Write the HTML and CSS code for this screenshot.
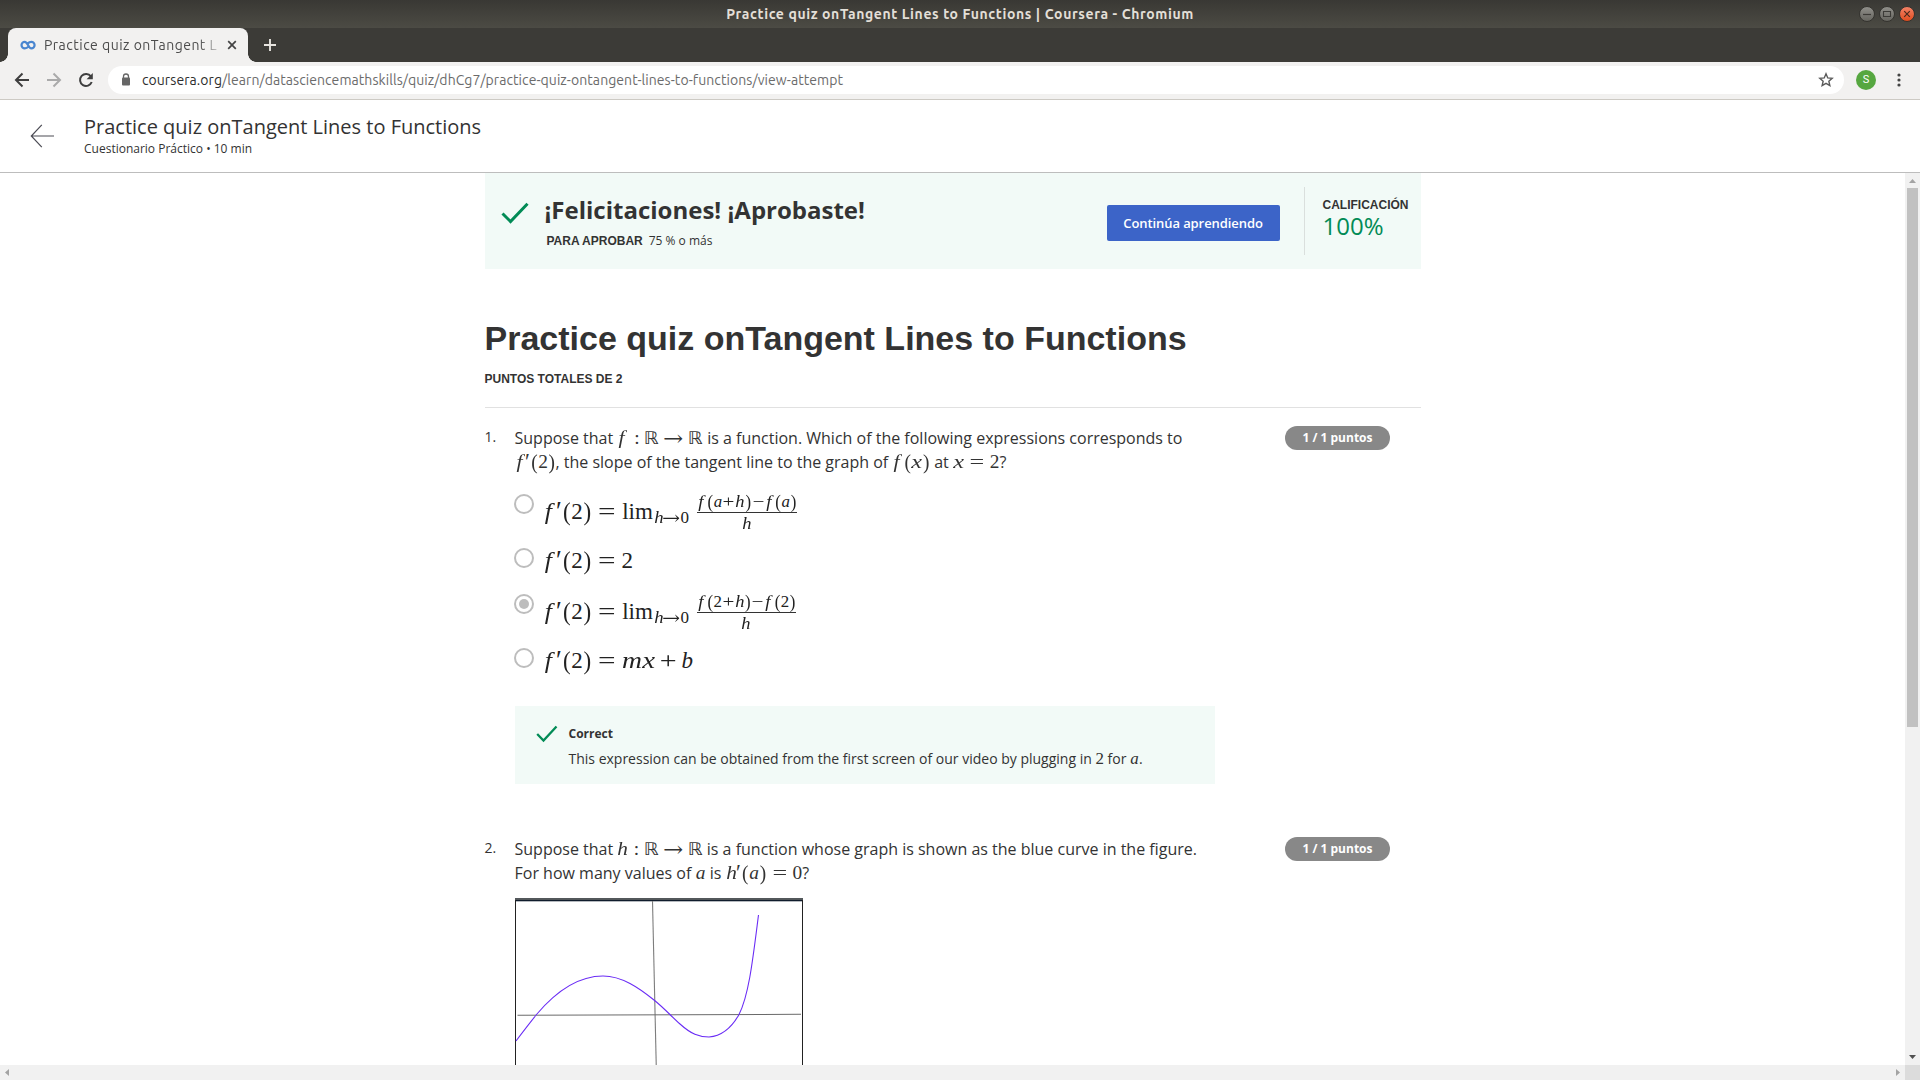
FILE: index.html
```html
<!DOCTYPE html>
<html lang="es">
<head>
<meta charset="utf-8">
<title>Practice quiz onTangent Lines to Functions | Coursera</title>
<link rel="stylesheet" href="styles.css">
</head>
<body>
<div class="window">
  <div class="titlebar">
    <span></span>
    <span class="window-title">Practice quiz onTangent Lines to Functions | Coursera - Chromium</span>
    <div class="window-buttons">
      <svg width="16" height="16" viewBox="0 0 16 16"><circle cx="8" cy="8" r="7.5" fill="url(#gray)" stroke="#33322e"/><path d="M4 8.5h8" stroke="#3c3b37" stroke-width="1.2"/><defs><linearGradient id="gray" x2="0" y2="1"><stop stop-color="#91908b"/><stop offset="1" stop-color="#65645e"/></linearGradient><linearGradient id="orange" x2="0" y2="1"><stop stop-color="#f48469"/><stop offset="1" stop-color="#e04b1c"/></linearGradient></defs></svg>
      <svg width="16" height="16" viewBox="0 0 16 16"><circle cx="8" cy="8" r="7.5" fill="url(#gray)" stroke="#33322e"/><path d="M4.5 5.5h7v5h-7z" fill="none" stroke="#3c3b37" stroke-width="1.1"/></svg>
      <svg width="16" height="16" viewBox="0 0 16 16"><circle cx="8" cy="8" r="7.5" fill="url(#orange)" stroke="#33322e"/><path d="M5.2 5.2l5.6 5.6M10.800 5.200l-5.600 5.600" stroke="#4a2a1c" stroke-width="1.2"/></svg>
    </div>
  </div>
  <div class="tabstrip">
    <div class="tab">
      <svg class="favicon" width="16" height="16" viewBox="0 0 16 16"><path d="M8.300 9.700C7.300 11 6.200 11.400 4.800 11.400a3.300 3.300 0 0 1 0-6.600C7.800 4.800 8.200 11.400 11.300 11.400a3.300 3.300 0 0 0 0-6.600C9.900 4.800 8.800 5.300 7.900 6.500" fill="none" stroke="#4a86d0" stroke-width="2.200"/></svg>
      <span class="tab-title">Practice quiz onTangent L</span>
      <svg width="10" height="10" viewBox="0 0 10 10"><path d="M1.200 1.200l7.600 7.600M8.800 1.200L1.200 8.800" stroke="#444" stroke-width="1.700"/></svg>
    </div>
    <svg class="newtab" width="12" height="12" viewBox="0 0 12 12"><path d="M6 0v12M0 6h12" stroke="#e6e4df" stroke-width="1.900"/></svg>
  </div>
  <div class="toolbar">
    <svg class="nav" width="16" height="16" viewBox="0 0 16 16"><path d="M15 8H2M8.500 1.500L2 8l6.500 6.500" fill="none" stroke="#3f3f3f" stroke-width="2"/></svg>
    <svg class="nav" width="16" height="16" viewBox="0 0 16 16"><path d="M1 8h13M7.500 1.500L14 8l-6.500 6.500" fill="none" stroke="#aaa" stroke-width="2"/></svg>
    <svg class="nav" width="16" height="16" viewBox="0 0 16 16"><path d="M12.900 4.400A6 6 0 1 0 13.700 10" fill="none" stroke="#3f3f3f" stroke-width="2"/><path d="M14.800 1v6.200H8.600z" fill="#3f3f3f"/></svg>
    <div class="omnibox">
      <svg width="10" height="14" viewBox="0 0 10 14"><path d="M2.500 6V3.500a2.500 2.500 0 0 1 5 0V6" fill="none" stroke="#666" stroke-width="1.300"/><rect x="1" y="4.500" width="8" height="8" rx="1" fill="#666"/></svg>
      <span class="url"><span class="host">coursera.org</span>/learn/datasciencemathskills/quiz/dhCg7/practice-quiz-ontangent-lines-to-functions/view-attempt</span>
      <svg width="16" height="16" viewBox="0 0 16 16"><path d="M8 1.800l1.750 4.100 4.450.4-3.350 2.950 1 4.350L8 11.300l-3.850 2.300 1-4.350L1.800 6.300l4.450-.4z" fill="none" stroke="#5a5a5a" stroke-width="1.400"/></svg>
    </div>
    <span class="avatar">S</span>
    <svg width="4" height="14" viewBox="0 0 4 14"><g fill="#444"><circle cx="2" cy="2" r="1.600"/><circle cx="2" cy="7" r="1.600"/><circle cx="2" cy="12" r="1.600"/></g></svg>
  </div>
  <header class="page-header">
    <svg width="24" height="24" viewBox="0 0 24 24"><path d="M11.800.8L1.300 12l10.500 11.200M1.300 12H24" fill="none" stroke="#4c4c55" stroke-width="1.200"/></svg>
    <div>
      <div class="header-title">Practice quiz onTangent Lines to Functions</div>
      <div class="header-sub">Cuestionario Práctico • 10 min</div>
    </div>
  </header>
  <div class="viewport">
    <main class="content">
      <section class="banner">
        <svg width="28" height="22" viewBox="0 0 28 22"><path d="M1.500 11.500l8 8L26.500 1.800" fill="none" stroke="#028b56" stroke-width="3"/></svg>
        <div class="banner-text">
          <div class="banner-title">¡Felicitaciones! ¡Aprobaste!</div>
          <div class="banner-sub"><strong class="caps">PARA APROBAR</strong><span>75 % o más</span></div>
        </div>
        <div class="button">Continúa aprendiendo</div>
        <div class="grade"><strong class="caps">CALIFICACIÓN</strong><span class="score">100%</span></div>
      </section>
      <h1>Practice quiz onTangent Lines to Functions</h1>
      <div class="total caps">PUNTOS TOTALES DE 2</div>

      <section class="question">
        <span class="number">1.</span>
        <div class="body">
          <div class="prompt">
            <div>Suppose that <span class="math"><i class="f">f</i><b class="rel colon">:</b><b class="bb">ℝ</b><b class="rel arrow">→</b><b class="bb">ℝ</b></span> is a function. Which of the following expressions corresponds to</div>
            <div><span class="math"><i class="f">f</i><b class="prime">′</b><b class="par">(</b><b class="d">2</b><b class="par">)</b></span>, the slope of the tangent line to the graph of <span class="math"><i class="f">f</i><b class="par">(</b><i class="x">x</i><b class="par">)</b></span> at <span class="math"><i class="x">x</i><b class="rel">=</b><b class="d">2</b></span>?</div>
          </div>
          <div class="options">
            <div class="option tall"><span class="radio"></span><span class="math"><i class="f">f</i><b class="prime">′</b><b class="par">(</b><b class="d">2</b><b class="par">)</b><b class="rel">=</b><b class="lim">lim</b><span class="sub"><i class="h">h</i><b class="arrow">→</b><b class="d">0</b></span><span class="frac"><span class="num"><i class="f">f</i><b class="par">(</b><i class="a">a</i><b class="op">+</b><i class="h">h</i><b class="par">)</b><b class="op">−</b><i class="f">f</i><b class="par">(</b><i class="a">a</i><b class="par">)</b></span><span class="den"><i class="h">h</i></span></span></span></div>
            <div class="option short"><span class="radio"></span><span class="math"><i class="f">f</i><b class="prime">′</b><b class="par">(</b><b class="d">2</b><b class="par">)</b><b class="rel">=</b><b class="d">2</b></span></div>
            <div class="option tall"><span class="radio checked"></span><span class="math"><i class="f">f</i><b class="prime">′</b><b class="par">(</b><b class="d">2</b><b class="par">)</b><b class="rel">=</b><b class="lim">lim</b><span class="sub"><i class="h">h</i><b class="arrow">→</b><b class="d">0</b></span><span class="frac"><span class="num"><i class="f">f</i><b class="par">(</b><b class="d">2</b><b class="op">+</b><i class="h">h</i><b class="par">)</b><b class="op">−</b><i class="f">f</i><b class="par">(</b><b class="d">2</b><b class="par">)</b></span><span class="den"><i class="h">h</i></span></span></span></div>
            <div class="option short"><span class="radio"></span><span class="math"><i class="f">f</i><b class="prime">′</b><b class="par">(</b><b class="d">2</b><b class="par">)</b><b class="rel">=</b><i class="m">m</i><i class="x">x</i><b class="plus">+</b><i class="b">b</i></span></div>
          </div>
          <div class="feedback">
            <svg width="22" height="18" viewBox="0 0 22 18"><path d="M1.200 9l6.300 6.500L20.500 1.500" fill="none" stroke="#028b56" stroke-width="2.300"/></svg>
            <div>
              <strong>Correct</strong>
              <p>This expression can be obtained from the first screen of our video by plugging in <span class="math"><b class="d">2</b></span> for <span class="math"><i class="a">a</i></span>.</p>
            </div>
          </div>
        </div>
        <span class="points">1 / 1 puntos</span>
      </section>

      <section class="question second">
        <span class="number">2.</span>
        <div class="body">
          <div class="prompt">
            <div>Suppose that <span class="math"><i class="h">h</i><b class="rel colon">:</b><b class="bb">ℝ</b><b class="rel arrow">→</b><b class="bb">ℝ</b></span> is a function whose graph is shown as the blue curve in the figure.</div>
            <div>For how many values of <span class="math"><i class="a">a</i></span> is <span class="math"><i class="h">h</i><b class="prime">′</b><b class="par">(</b><i class="a">a</i><b class="par">)</b><b class="rel">=</b><b class="d">0</b></span>?</div>
          </div>
          <svg class="figure" width="288" height="240" viewBox="0 0 288 240">
            <rect width="288" height="2" fill="#53585b"/><rect y="2" width="288" height="1.300" fill="#101c2c"/>
            <path d="M.5 2v238M287.500 2v238" stroke="#222" fill="none"/>
            <path d="M137.500 3l5.400 237" stroke="#7d7d7d" stroke-width="1.100"/>
            <path d="M2.500 117.300L286 116.300" stroke="#6a6a6a" stroke-width="1.100"/>
            <path d="M1 143C7 135 14 126 21.500 116.500C43 91 64 78 88 78C107 78 124 90 139 102C149 110 157 119 165 126C176 136 184 139 194 139C207 138 217 129 224 116.500C234 97 238 60 243.500 17" fill="none" stroke="#6a2cf5" stroke-width="1.100"/>
          </svg>
        </div>
        <span class="points">1 / 1 puntos</span>
      </section>
    </main>
    <div class="vscroll">
      <svg width="7" height="4" viewBox="0 0 7 4"><path d="M0 4L3.500 0 7 4z" fill="#a3a3a3"/></svg>
      <span class="thumb"></span>
      <svg width="7" height="4" viewBox="0 0 7 4"><path d="M0 0l3.500 4L7 0z" fill="#505050"/></svg>
    </div>
    <div class="hscroll">
      <svg width="4" height="7" viewBox="0 0 4 7"><path d="M4 0L0 3.500 4 7z" fill="#a3a3a3"/></svg>
      <svg width="4" height="7" viewBox="0 0 4 7"><path d="M0 0l4 3.500L0 7z" fill="#a3a3a3"/></svg>
    </div>
    <div class="corner"></div>
  </div>
</div>
</body>
</html>
```
FILE: styles.css
```css
* { box-sizing: border-box; }
body { margin: 0; background: #fff; color: #373a3c; font-family: "Open Sans", "Noto Sans", sans-serif; }
svg { display: block; flex: none; }
.window { width: 1920px; height: 1080px; overflow: hidden; display: grid; grid-template-rows: 28px 34px 38px 73px 907px; }

.titlebar { display: grid; grid-template-columns: 1fr auto 1fr; align-items: center; background: linear-gradient(#393834, #4c4b44); }
.window-title { color: #e3dfd7; font: bold 14px/28px Ubuntu, "Noto Sans", sans-serif; letter-spacing: .6px; white-space: nowrap; }
.window-buttons { display: flex; justify-content: flex-end; gap: 4px; padding-right: 5px; }

.tabstrip { display: flex; align-items: center; background: #3c3b37; padding-left: 8px; }
.tab { position: relative; width: 240px; height: 34px; display: flex; align-items: center; background: #f2f1f0; border-radius: 8px 8px 0 0; padding: 0 11px 0 12px; }
.tab::before, .tab::after { content: ""; position: absolute; bottom: 0; width: 8px; height: 8px; }
.tab::before { left: -8px; background: radial-gradient(circle at 0 0, #3c3b37 7.500px, #f2f1f0 8px); }
.tab::after { right: -8px; background: radial-gradient(circle at 100% 0, #3c3b37 7.500px, #f2f1f0 8px); }
.tab-title { width: 177px; margin: 0 8px 0 8px; white-space: nowrap; font: 14px/20px Ubuntu, "Noto Sans", sans-serif; letter-spacing: .48px; color: #4c4c4c; -webkit-mask-image: linear-gradient(90deg, #000 155px, transparent 180px); mask-image: linear-gradient(90deg, #000 155px, transparent 180px); }
.newtab { margin-left: 16px; }

.toolbar { display: flex; align-items: center; background: #f2f1f0; border-bottom: 1px solid #cdcac4; padding: 0 18px 2px 14px; }
.nav { margin-right: 16px; }
.omnibox { width: 1736px; height: 28px; margin-left: -2px; padding: 0 10px 0 13px; display: flex; align-items: center; background: #fff; border-radius: 14px; }
.url { flex: 1; margin-left: 11px; font: 14px/20px Ubuntu, "Noto Sans", sans-serif; letter-spacing: .07px; color: #6b6b6b; white-space: nowrap; }
.host { color: #2d2d2d; }
.avatar { width: 20px; height: 20px; margin: 0 21px 0 12px; border-radius: 50%; background: #56a740; color: #fff; font: 11px/20px Roboto, sans-serif; text-align: center; }

.page-header { display: flex; align-items: flex-start; gap: 30px; padding: 12px 0 0 30px; border-bottom: 1px solid #bdbdbd; color: #333; }
.page-header > svg { margin-top: 12px; }
.header-title { font-size: 20px; line-height: 30px; }
.header-sub { font-size: 12px; line-height: 14px; }

.viewport { display: grid; grid-template-columns: 1905px 15px; grid-template-rows: 892px 15px; }
.content { overflow: hidden; padding: 0 484px 0 484.500px; color: #333; }
.banner { height: 96px; background: #f2faf7; display: flex; align-items: flex-start; padding-left: 16px; }
.banner > svg { margin-top: 29px; }
.banner-text { width: 578px; flex: none; padding: 21px 0 0 16px; }
.banner-title { font-size: 24px; line-height: 32px; font-weight: 700; }
.banner-sub { display: flex; align-items: baseline; gap: 6px; margin: 6px 0 0 2px; font-size: 12px; line-height: 18px; }
.caps { font-family: "Liberation Sans", Arial, sans-serif; font-size: 12px; font-weight: 700; }
.button { width: 173px; height: 36px; flex: none; margin-top: 32px; background: #3c64c8; border-radius: 2px; color: #fff; font-size: 13px; font-weight: 600; letter-spacing: -.08px; line-height: 36px; text-align: center; }
.grade { height: 68px; margin: 14px 0 0 24px; padding: 10px 0 0 18px; border-left: 1px solid #dadfdd; }
.grade > * { display: block; }
.grade .caps { line-height: 16px; }
.score { font-size: 24px; line-height: 26px; color: #028b56; }
h1 { margin: 49px 0 0; font: bold 34px/40px "Liberation Sans", Arial, sans-serif; white-space: nowrap; }
.total { margin-top: 12px; height: 38px; line-height: 18px; border-bottom: 1px solid #e1e1e1; }

.question { display: grid; grid-template-columns: 30px 700px 1fr; padding-top: 18px; }
.second { padding-top: 53px; }
.number { font-size: 14px; line-height: 22px; }
.points { width: 105px; height: 24px; margin: 0 0 0 70.500px; border-radius: 12px; background: #888; color: #fff; font-size: 12px; font-weight: 700; line-height: 23px; text-align: center; }
.prompt { font-size: 16px; line-height: 24px; white-space: nowrap; }
.prompt > div { height: 24px; }

.math { display: inline-flex; align-items: baseline; line-height: 0; font-family: "Liberation Serif", "Times New Roman", serif; font-size: 1.21em; }
.math b { font-weight: 400; }
.math b, .math i { display: block; text-align: center; white-space: nowrap; }
.math .f { width: .597em; padding-left: .1em; text-align: left; transform: scaleX(1.12); }
.math .h { width: .576em; transform: scaleX(1.1); }
.math .a { width: .529em; }
.math .x { width: .572em; transform: scaleX(1.25); }
.math .m { width: .878em; transform: scaleX(1.2); }
.math .b { width: .429em; }
.math .d { width: .5em; }
.math .par { width: .389em; transform: scaleY(1.12); }
.math .prime { width: .243em; transform: translateX(-.04em) scale(1.15); }
.math .rel { width: 1.333em; transform: scaleX(1.35); }
.math .colon { width: .833em; transform: none; }
.math .arrow { width: 1em; font-family: "DejaVu Math TeX Gyre", "DejaVu Serif", serif; transform: scaleX(1.12); }
.math .rel.arrow { width: 1.556em; transform: scaleX(1.1) translateX(-.04em); }
.math .bb { width: .802em; font-size: .9em; font-family: "DejaVu Sans", sans-serif; transform: translateX(-.06em) scaleX(1.08); }
.math .plus { width: 1.150em; transform: scaleX(1.3); }
.math .op { width: .778em; transform: scaleX(1.25); }
.math .lim { width: 1.389em; }
.sub { display: flex; align-items: baseline; font-size: .74em; position: relative; top: .24em; }
.frac { position: relative; top: -12.500px; display: flex; flex-direction: column; align-items: center; margin-left: 8px; font-size: .73em; }
.num, .den { display: flex; align-items: baseline; }
.num { line-height: 20px; border-bottom: 1px solid #333; }
.den { line-height: 22px; }

.options { padding-top: 20px; font-size: 19.050px; }
.options .math > .rel { width: 1.290em; }
.option { display: flex; align-items: flex-start; margin-left: -.5px; }
.option > .math { height: 0; margin-left: 9px; color: #222; }
.tall { height: 54px; }
.tall > .math { padding-top: 10px; }
.short { height: 46px; }
.short > .math { padding-top: 12px; }
.radio { width: 20px; height: 20px; border: 2px solid #bdbdbd; border-radius: 50%; flex: none; display: grid; place-items: center; }
.checked::after { content: ""; width: 10px; height: 10px; border-radius: 50%; background: #bdbdbd; }
.feedback { display: flex; height: 78px; margin-top: 12px; padding: 19px 0 0 21px; background: #f2faf7; gap: 11px; }
.feedback strong { display: block; font-size: 12px; line-height: 18px; }
.feedback p { margin: 4px 0 0; font-size: 14px; line-height: 24px; white-space: nowrap; }
.figure { margin: 13px 0 0 .5px; }

.vscroll { background: #f1f1f1; display: flex; flex-direction: column; align-items: center; padding: 6px 0; }
.thumb { width: 11px; height: 539px; margin: 5px 0 auto; background: #c1c1c1; }
.hscroll { background: #f1f1f1; display: flex; align-items: center; justify-content: space-between; padding: 0 5px; }
.corner { background: #dcdcdc; }
```
